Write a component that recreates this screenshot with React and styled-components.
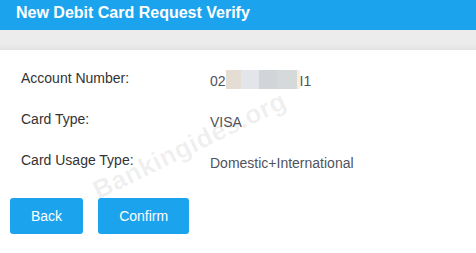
import React from "react"
import styled, { createGlobalStyle } from "styled-components"

const GlobalStyle = createGlobalStyle`
  html, body {
    margin: 0;
    padding: 0;
    background: #fff;
    font-family: "Liberation Sans", Arial, sans-serif;
  }
`

const Page = styled.div`
  position: relative;
  width: 476px;
  height: 253px;
  overflow: hidden;
`

const Header = styled.div`
  height: 30px;
  background: #1ba3ee;
  padding-left: 16px;
  box-sizing: border-box;
`

const Title = styled.h1`
  margin: 0;
  font-size: 16px;
  line-height: 25px;
  font-weight: bold;
  color: #fff;
`

const Band = styled.div`
  height: 20px;
  background: linear-gradient(#ececec 0, #ececec 14px, #e2e2e2 20px);
`

const Details = styled.div`
  padding: 20px 0 0 21px;
  display: flex;
  flex-direction: column;
  gap: 22px;
`

const Row = styled.div`
  display: flex;
  align-items: flex-start;
  font-size: 14px;
  line-height: 16px;
`

const Label = styled.div`
  width: 189px;
  color: #333;
`

const Value = styled.div`
  padding-top: 3px;
  color: #4f535c;
  display: flex;
  align-items: center;
  height: 16px;
`

const Mask = styled.span`
  display: inline-block;
  width: ${p => p.w}px;
  height: 19px;
  margin-top: -3px;
  background: ${p => p.c};
`

const Actions = styled.div`
  display: flex;
  gap: 15px;
  padding: 27px 0 0 10px;
`

const Button = styled.button`
  height: 36px;
  padding: 0 21px;
  border: none;
  border-radius: 3px;
  background: #1ba3ee;
  color: #fff;
  font-family: inherit;
  font-size: 14px;
  cursor: pointer;
`

const Watermark = styled.div`
  position: absolute;
  left: 84px;
  top: 130px;
  font-size: 26px;
  font-weight: bold;
  color: rgba(0, 0, 0, 0.07);
  transform: rotate(-26deg);
  pointer-events: none;
  letter-spacing: 0.5px;
`

const masks = [
  { w: 15, c: "#e5ddd3" },
  { w: 18, c: "#e2e5e9" },
  { w: 18, c: "#d2d5d8" },
  { w: 20, c: "#d6d9d9" },
  { w: 3, c: "#fbeedd" }
]

export default function App() {
  return (
    <Page>
      <GlobalStyle />
      <Header>
        <Title>New Debit Card Request Verify</Title>
      </Header>
      <Band />
      <Details>
        <Row>
          <Label>Account Number:</Label>
          <Value>
            02
            {masks.map((m, i) => (
              <Mask key={i} w={m.w} c={m.c} />
            ))}
            I1
          </Value>
        </Row>
        <Row>
          <Label>Card Type:</Label>
          <Value>VISA</Value>
        </Row>
        <Row>
          <Label>Card Usage Type:</Label>
          <Value>Domestic+International</Value>
        </Row>
      </Details>
      <Actions>
        <Button>Back</Button>
        <Button>Confirm</Button>
      </Actions>
      <Watermark>Bankingides.org</Watermark>
    </Page>
  )
}
